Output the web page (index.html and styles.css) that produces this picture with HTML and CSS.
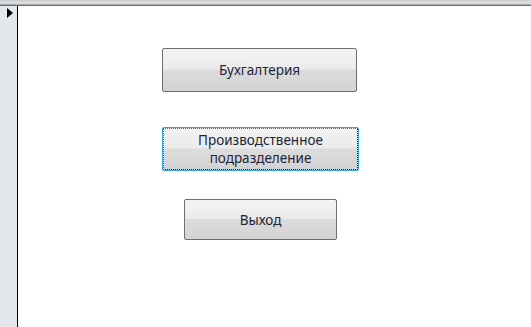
FILE: index.html
```html
<!DOCTYPE html>
<html lang="ru">
<head>
    <meta charset="UTF-8">
    <title>Главная форма</title>
    <link rel="stylesheet" href="styles.css">
</head>
<body>
    <div class="titlebar"></div>
    <div class="form">
        <div class="selector">
            <span class="arrow"></span>
        </div>
        <div class="detail">
            <button class="btn btn-buh">Бухгалтерия</button>
            <button class="btn btn-prod focused"><span class="focus-ring">Производственное<br>подразделение</span></button>
            <button class="btn btn-exit">Выход</button>
        </div>
    </div>
</body>
</html>
```

FILE: styles.css
```css
html, body {
    height: 100%;
}
body {
    margin: 0;
    background: #FFFFFF;
    font-family: "Noto Sans", "Open Sans", sans-serif;
    display: flex;
    flex-direction: column;
}
.titlebar {
    height: 6px;
    background: linear-gradient(#c4c7ca 0, #dfe1e3 2px, #d2d4d6 4px, #7d7f82 5px, #5f6164 6px);
}
.form {
    flex: 1;
    display: flex;
}
.selector {
    width: 17px;
    background: #e4e8ed;
    border-right: 1px solid #000000;
    position: relative;
}
.arrow {
    position: absolute;
    left: 7px;
    top: 2px;
    width: 0;
    height: 0;
    border-top: 5px solid transparent;
    border-bottom: 5px solid transparent;
    border-left: 6px solid #000000;
}
.detail {
    flex: 1;
    display: flex;
    flex-direction: column;
    align-items: flex-start;
    padding-top: 42px;
}
.btn {
    font-family: "Noto Sans", "Open Sans", sans-serif;
    font-size: 13.5px;
    color: #1c2538;
    line-height: 18px;
    border: 1px solid #6f6f6f;
    border-radius: 2px;
    background: linear-gradient(#f3f3f3 0%, #ebebeb 48%, #dcdcdc 50%, #d3d3d3 100%);
    padding: 0;
    cursor: pointer;
}
.btn-buh {
    margin-left: 144px;
    width: 195px;
    height: 44px;
}
.btn-prod {
    margin-left: 144px;
    margin-top: 35px;
    width: 197px;
    height: 44px;
    border-color: #34a3e6;
    padding: 0;
    display: flex;
}
.focus-ring {
    flex: 1;
    display: flex;
    align-items: center;
    justify-content: center;
    border: 1px dotted #222222;
    border-top-color: #c0392b;
    border-left-color: #c0392b;
    margin: 0;
}
.btn-exit {
    margin-left: 166px;
    margin-top: 28px;
    width: 153px;
    height: 41px;
}
```
